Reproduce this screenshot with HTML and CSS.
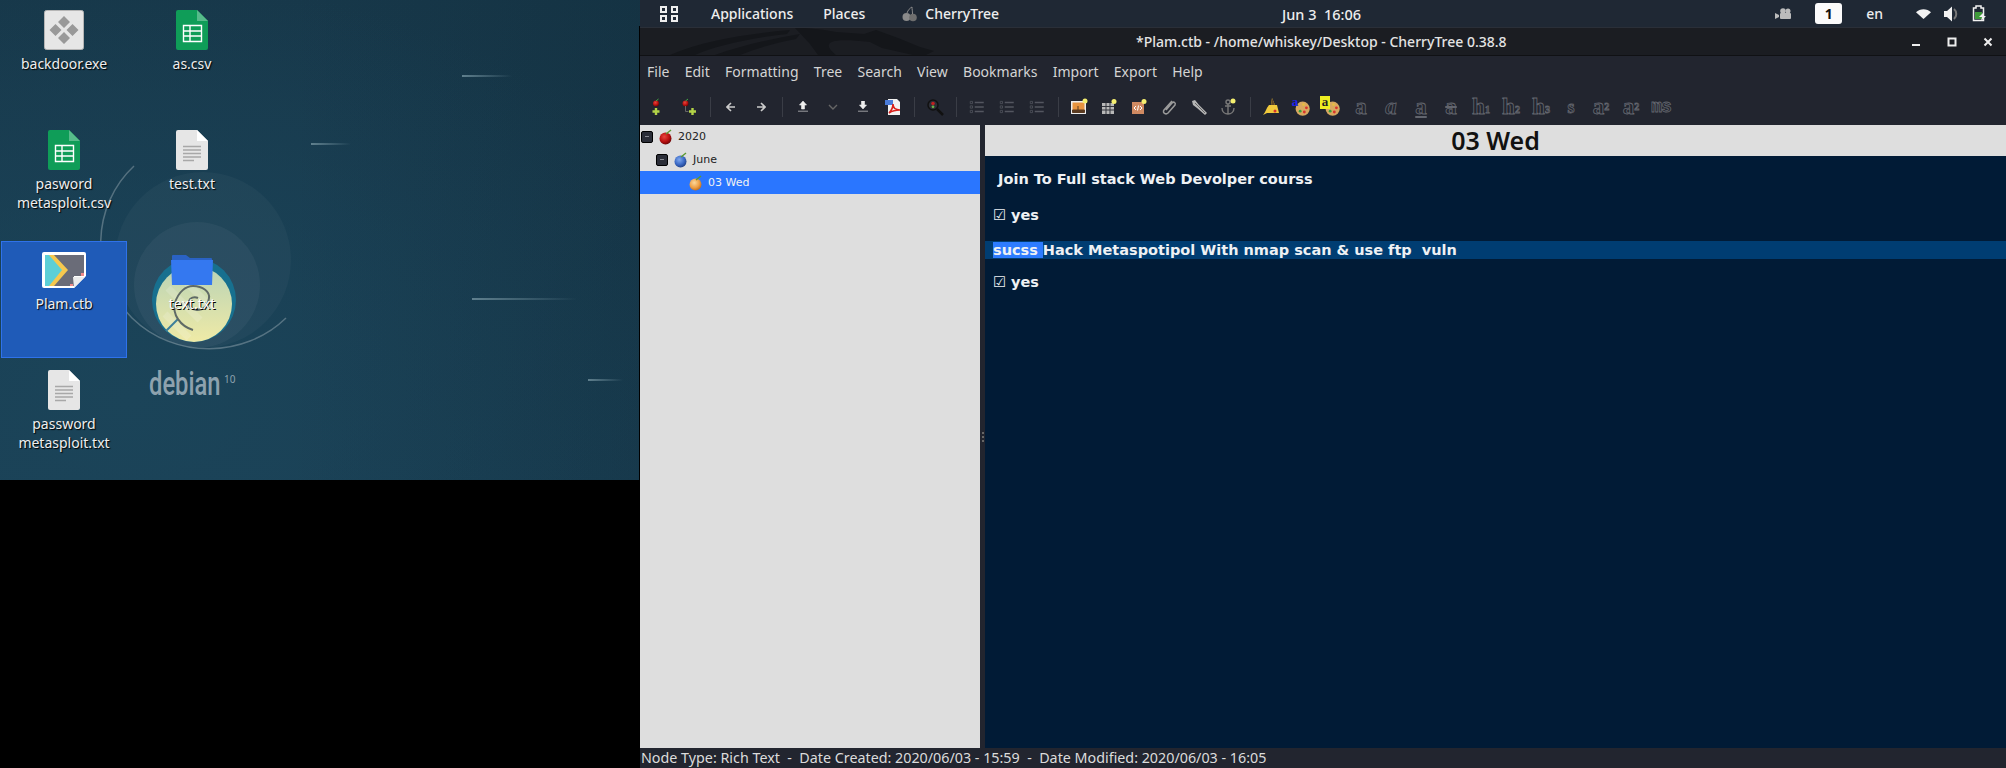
FILE: index.html
```html
<!DOCTYPE html>
<html lang="en">
<head>
    <meta charset="UTF-8">
    <title>Plam.ctb - CherryTree</title>
    <link rel="stylesheet" href="styles.css">
</head>
<body>
    <svg class="defs" width="0" height="0">
        <defs>
            <radialGradient id="redBall" cx="40%" cy="35%" r="70%"><stop offset="0" stop-color="#e8453c"/><stop offset=".6" stop-color="#b80f0f"/><stop offset="1" stop-color="#5e0505"/></radialGradient>
            <radialGradient id="blueBall" cx="40%" cy="35%" r="70%"><stop offset="0" stop-color="#7fa8ee"/><stop offset=".6" stop-color="#3a68c4"/><stop offset="1" stop-color="#1f3d80"/></radialGradient>
            <radialGradient id="orangeBall" cx="40%" cy="35%" r="70%"><stop offset="0" stop-color="#fbd79a"/><stop offset=".6" stop-color="#ee9f45"/><stop offset="1" stop-color="#b96a1e"/></radialGradient>
            <linearGradient id="creamFill" x1="0" y1="0" x2="0" y2="1"><stop offset="0" stop-color="#b9d3b6"/><stop offset="1" stop-color="#efeaa6"/></linearGradient>
            <symbol id="sheet" viewBox="0 0 48 48">
                <path d="M10 4h19l11 11v27a2 2 0 0 1-2 2H10a2 2 0 0 1-2-2V6a2 2 0 0 1 2-2z" fill="#0f9d58"/>
                <path d="M29 4l11 11H29z" fill="#57bb8a"/>
                <path d="M15.5 19.5h18v16h-18zM22 19.5v16M15.5 25h18M15.5 30h18" fill="none" stroke="#fff" stroke-width="1.4"/>
            </symbol>
            <symbol id="txtfile" viewBox="0 0 48 48">
                <path d="M10 4h19l11 11v27a2 2 0 0 1-2 2H10a2 2 0 0 1-2-2V6a2 2 0 0 1 2-2z" fill="#e6e6e6"/>
                <path d="M29 4l11 11H29z" fill="#fff"/>
                <path d="M15 20.5h18M15 24h18M15 27.5h18M15 31h18M15 34.500h11" stroke="#a8a8a8" stroke-width="1.4"/>
            </symbol>
            <symbol id="listicon" viewBox="0 0 24 24">
                <path d="M9 6h12M9 12h12M9 18h12" stroke="#53565f" stroke-width="2.200" fill="none"/>
                <path d="M3 4.500h3v3H3zM3 10.500h3v3H3zM3 16.500h3v3H3z" fill="none" stroke="#53565f"/>
            </symbol>
            <symbol id="palette" viewBox="0 0 24 24">
                <circle cx="14" cy="14" r="8.500" fill="#d9a860"/>
                <circle cx="11" cy="17" r="1.700" fill="#3aa03a"/><circle cx="16" cy="18" r="1.700" fill="#d8342c"/><circle cx="18.500" cy="13" r="1.700" fill="#d8342c"/><circle cx="15" cy="9" r="1.500" fill="#e8c03a"/>
            </symbol>
        </defs>
    </svg>

    <div class="desktop">
        <svg class="wallart" width="640" height="480" viewBox="0 0 640 480">
            <circle cx="203" cy="260" r="88" fill="#fff" opacity=".03"/>
            <circle cx="197" cy="285" r="63" fill="#fff" opacity=".045"/>
            <path d="M134 166C92 205 88 275 132 318C175 360 245 358 286 318" fill="none" stroke="#fff" stroke-opacity=".26" stroke-width="1.500"/>
            <circle cx="194" cy="300" r="42" fill="#17708f"/>
            <circle cx="194" cy="304" r="38" fill="url(#creamFill)"/>
            <path d="M168 288l32 32M180 276l32 32M165 314l24 24" stroke="#fff" stroke-opacity=".16" stroke-width="7"/>
            <path d="M166 331l12-12" stroke="#3d7f9a" stroke-width="2"/>
            <path d="M193 330C180 326 172 314 175 303C178 292 186 286 193 286C203 286 210 292 209 298C208 306 203 310 197 310C192 310 188 306 189 301C190 298 194 296 198 298" fill="none" stroke="#5f6a66" stroke-width="2"/>
        </svg>
        <i class="streak s1"></i><i class="streak s2"></i><i class="streak s3"></i><i class="streak s4"></i>
        <div class="brand"><span class="brand-name">debian</span><span class="brand-ver">10</span></div>

        <div class="icons">
            <div class="icon">
                <svg width="48" height="48" viewBox="0 0 48 48">
                    <rect x="4.500" y="4.500" width="39" height="39" rx="2" fill="#e6e6e6" stroke="#b5b5b5"/>
                    <path d="M24 10l6 6-6 6-6-6zM15.500 18l6 6-6 6-6-6zM32.500 18l6 6-6 6-6-6zM24 26l6 6-6 6-6-6z" fill="#999"/>
                </svg>
                <span>backdoor.exe</span>
            </div>
            <div class="icon"><svg width="48" height="48"><use href="#sheet"/></svg><span>as.csv</span></div>
            <div class="icon"><svg width="48" height="48"><use href="#sheet"/></svg><span>pasword<br>metasploit.csv</span></div>
            <div class="icon"><svg width="48" height="48"><use href="#txtfile"/></svg><span>test.txt</span></div>
            <div class="icon selected">
                <svg width="48" height="48" viewBox="0 0 48 48">
                    <path d="M4 6h40a2 2 0 0 1 2 2v22l-12 12H4a2 2 0 0 1-2-2V8a2 2 0 0 1 2-2z" fill="#fff"/>
                    <path d="M5 9h39v21H34v10H5z" fill="#6a6c78"/>
                    <path d="M5 9h6l12 15-12 16H5z" fill="#5ccfd6"/>
                    <path d="M9 9h5l14 15-14 16H9l13-16z" fill="#f6c84e"/>
                    <path d="M33 31h12L34 42z" fill="#ececec"/>
                    <path d="M41 27h3v3h-3zM30 38h3v2h-3z" fill="#f08a8a"/>
                </svg>
                <span>Plam.ctb</span>
            </div>
            <div class="icon folder">
                <svg width="48" height="48" viewBox="0 0 48 48">
                    <path d="M5 9h13l4 3h21a1 1 0 0 1 1 1v8H4V10a1 1 0 0 1 1-1z" fill="#2a62c4"/>
                    <path d="M3 14h42l-1 25H4z" fill="#3478f0"/>
                </svg>
                <span>text.txt</span>
            </div>
            <div class="icon"><svg width="48" height="48"><use href="#txtfile"/></svg><span>password<br>metasploit.txt</span></div>
        </div>
    </div>

    <div class="app">
        <header class="topbar">
            <svg class="activities" width="18" height="16" viewBox="0 0 18 16">
                <path d="M1 1h5v5H1zM12 1h5v5h-5zM1 10h5v5H1zM12 10h5v5h-5z" fill="none" stroke="#eee" stroke-width="2"/>
            </svg>
            <span class="top-item apps">Applications</span>
            <span class="top-item places">Places</span>
            <svg class="top-cherry" width="16" height="16" viewBox="0 0 16 16">
                <circle cx="4.500" cy="11" r="4" fill="#8a8a8a"/><circle cx="11" cy="11.500" r="3.800" fill="#6e6e6e"/>
                <path d="M5 7C6 4 8 2 10 1M10.500 8C10.500 5 10 3 10 1" fill="none" stroke="#8a8a8a"/>
            </svg>
            <span class="top-item">CherryTree</span>
            <span class="clock">Jun 3&nbsp; 16:06</span>
            <div class="tray">
                <svg class="cam" width="16" height="12" viewBox="0 0 16 12"><circle cx="8" cy="3" r="2.800" fill="#bbb"/><circle cx="13" cy="3" r="2.500" fill="#bbb"/><rect x="5" y="5" width="11" height="6" rx="1" fill="#bbb"/><path d="M0 5l4 2v2l-4 2z" fill="#bbb"/></svg>
                <span class="workspace">1</span>
                <span class="lang">en</span>
                <svg class="wifi" width="15" height="10" viewBox="0 0 15 10"><path d="M0 3.200C4-.8 11-.8 15 3.200L7.500 10z" fill="#f2f2f2"/></svg>
                <svg class="vol" width="15" height="16" viewBox="0 0 15 16"><path d="M0 5h3l5-4.500v15L3 11H0z" fill="#f2f2f2"/><path d="M10 3c3 2.500 3 7.500 0 10" fill="none" stroke="#777" stroke-width="2"/></svg>
                <svg class="batt" width="15" height="17" viewBox="0 0 15 17"><path d="M4 1h5v2h2.500v12.500h-10V3H4z" fill="none" stroke="#f2f2f2" stroke-width="1.500"/><path d="M3 7h7v7H3z" fill="#3f9a3a"/><path d="M11 8l-4 4h3l-1 4 5-5h-3z" fill="#f2f2f2"/></svg>
            </div>
        </header>

        <div class="titlebar">
            <svg class="dragon" width="300" height="27" viewBox="0 0 300 27">
                <path d="M15 27C50 12 90 6 135 2l-3 4C95 10 60 18 40 27zM60 27C85 18 115 11 145 6l-4 5C120 15 100 21 85 27z" fill="#14161a"/>
                <path d="M140 0l15 16 8 11h18C170 18 165 8 215 14l12 6 40 9 12-6-14-4-22-9-22-8-12 4-28-2C170 2 158 0 140 0z" fill="#14161a"/>
            </svg>
            <span class="title">*Plam.ctb - /home/whiskey/Desktop - CherryTree 0.38.8</span>
            <div class="win-btns">
                <svg width="10" height="10" viewBox="0 0 10 10"><path d="M1 8h8" stroke="#eee" stroke-width="2"/></svg>
                <svg width="10" height="10" viewBox="0 0 10 10"><rect x="1.500" y="1.500" width="7" height="7" fill="none" stroke="#eee" stroke-width="2"/></svg>
                <svg width="10" height="10" viewBox="0 0 10 10"><path d="M1.500 1.500l7 7M8.500 1.500l-7 7" stroke="#eee" stroke-width="2"/></svg>
            </div>
        </div>

        <nav class="menubar">
            <span>File</span><span>Edit</span><span>Formatting</span><span>Tree</span><span>Search</span><span>View</span><span>Bookmarks</span><span>Import</span><span>Export</span><span>Help</span>
        </nav>

        <div class="toolbar">
            <span class="tb"><svg width="20" height="20" viewBox="0 0 20 20"><circle cx="10" cy="6.500" r="3" fill="url(#redBall)"/><path d="M10 4l2.500-2" stroke="#4a4"/><path d="M8.800 11h2.400v2.300h2.300v2.400h-2.300V18H8.800v-2.300H6.500v-2.400h2.300z" fill="#b3d347"/></svg></span>
            <span class="tb tb-wide"><svg width="20" height="20" viewBox="0 0 20 20"><circle cx="6.500" cy="6.500" r="3" fill="url(#redBall)"/><path d="M6.500 4L9 2" stroke="#4a4"/><path d="M6.500 9v5.500h3" stroke="#666" fill="none"/><path d="M12.300 11h2.400v2.300H17v2.400h-2.300V18h-2.400v-2.300H10v-2.400h2.300z" fill="#b3d347"/></svg></span>
            <i class="sep"></i>
            <span class="tb"><svg width="10" height="10" viewBox="0 0 10 10"><path d="M5 1L1 5l4 4M1 5h8" fill="none" stroke="#ccc" stroke-width="1.600"/></svg></span>
            <span class="tb"><svg width="10" height="10" viewBox="0 0 10 10"><path d="M5 1l4 4-4 4M9 5H1" fill="none" stroke="#ccc" stroke-width="1.600"/></svg></span>
            <i class="sep"></i>
            <span class="tb"><svg width="10" height="11" viewBox="0 0 10 11"><path d="M5 0l3.500 4H6.500v4h-3V4H1.500zM0 10.200h10" fill="#eee" stroke="#eee" stroke-width=".6"/></svg></span>
            <span class="tb"><svg width="10" height="10" viewBox="0 0 10 10"><path d="M1 3l4 4 4-4" fill="none" stroke="#666" stroke-width="1.400"/></svg></span>
            <span class="tb"><svg width="10" height="11" viewBox="0 0 10 11"><path d="M3.500 0h3v4h2L5 8 1.500 4h2zM0 10.200h10" fill="#eee" stroke="#eee" stroke-width=".6"/></svg></span>
            <span class="tb"><svg width="18" height="18" viewBox="0 0 18 18"><path d="M4 1h9l3 3v13H4z" fill="#f2f2f2"/><path d="M1 2h8v5H1z" fill="#4a7bd8"/><path d="M5 15c3-3 4-6 4-9 0 4 3 6 7 6-4 0-8 1-11 3z" fill="none" stroke="#d8201c" stroke-width="1.600"/></svg></span>
            <i class="sep"></i>
            <span class="tb"><svg width="18" height="18" viewBox="0 0 18 18"><circle cx="7" cy="7" r="5" fill="#2c2e36" stroke="#111" stroke-width="1.500"/><path d="M11 11l6 6" stroke="#111" stroke-width="2.500"/><circle cx="7" cy="5.500" r="1.800" fill="#c02020"/><circle cx="7" cy="8.800" r="1.400" fill="#6ab04a"/></svg></span>
            <i class="sep"></i>
            <span class="tb"><svg width="18" height="18"><use href="#listicon"/></svg></span>
            <span class="tb"><svg width="18" height="18"><use href="#listicon"/></svg></span>
            <span class="tb"><svg width="18" height="18"><use href="#listicon"/></svg></span>
            <i class="sep"></i>
            <span class="tb"><svg width="18" height="18" viewBox="0 0 18 18"><rect x="1" y="3" width="15" height="13" fill="#eee"/><rect x="2.500" y="4.500" width="12" height="10" fill="#e89440"/><path d="M2.500 12h12v2.500h-12zM8 12V8" stroke="#5a3a20" fill="#5a3a20"/><circle cx="15" cy="3" r="2.500" fill="#f5ef70"/></svg></span>
            <span class="tb"><svg width="18" height="18" viewBox="0 0 18 18"><path d="M2 5h12v11H2z" fill="#b8b8b8"/><path d="M2 8.500h12M2 12h12M6 5v11M10 5v11" stroke="#33353d"/><circle cx="14" cy="3.500" r="2.500" fill="#f5ef70"/></svg></span>
            <span class="tb"><svg width="18" height="18" viewBox="0 0 18 18"><rect x="2" y="4" width="12" height="12" fill="#d08a62"/><path d="M6 8l-2 2 2 2M10 8l2 2-2 2M8.500 7.500l-1 5" fill="none" stroke="#fff"/><circle cx="14" cy="3.500" r="2.500" fill="#f5ef70"/></svg></span>
            <span class="tb"><svg width="18" height="18" viewBox="0 0 18 18"><path d="M12 3L4 12c-2 3 2 5 4 3l7-8c1-2-1-4-3-2L6 12" fill="none" stroke="#9a9a9a" stroke-width="1.500"/></svg></span>
            <span class="tb"><svg width="18" height="18" viewBox="0 0 18 18"><path d="M2 3l3-1 4 5 8 8-2 2-8-7-4-3z" fill="#b5b5b5"/><path d="M5 5l10 10" stroke="#666"/></svg></span>
            <span class="tb"><svg width="18" height="18" viewBox="0 0 18 18"><circle cx="8" cy="4" r="2" fill="none" stroke="#777" stroke-width="1.400"/><path d="M8 6v10M2 10c0 4 3 6 6 6s6-2 6-6M5 8h6" fill="none" stroke="#777" stroke-width="1.400"/><circle cx="13" cy="3" r="2.500" fill="#f5ef70"/></svg></span>
            <i class="sep"></i>
            <span class="tb"><svg width="18" height="18" viewBox="0 0 18 18"><path d="M10 0l3 7h2l2 8H5l-4 2c3-3 3-7 6-10h2z" fill="#f0c93c"/><path d="M10 0l3 7H9z" fill="#5b4426"/><circle cx="13" cy="13" r="1.500" fill="#d8342c"/></svg></span>
            <span class="tb tb-paint"><svg width="20" height="20"><use href="#palette"/></svg><b class="paint-a fg">a</b></span>
            <span class="tb tb-paint"><svg width="20" height="20"><use href="#palette"/></svg><b class="paint-a bg">a</b></span>
            <span class="tb glyph">a</span>
            <span class="tb glyph slant">a</span>
            <span class="tb glyph under">a</span>
            <span class="tb glyph strike">a</span>
            <span class="tb glyph">h<small>1</small></span>
            <span class="tb glyph">h<small>2</small></span>
            <span class="tb glyph">h<small>3</small></span>
            <span class="tb glyph little">s</span>
            <span class="tb glyph">a<sup>2</sup></span>
            <span class="tb glyph">a<sub>2</sub></span>
            <span class="tb glyph mono">ms</span>
        </div>

        <div class="panes">
            <aside class="tree">
                <div class="tree-row">
                    <i class="expander"></i>
                    <svg width="14" height="16" viewBox="0 0 14 16"><circle cx="6.500" cy="9.500" r="6" fill="url(#redBall)"/><path d="M7 5l5-4" stroke="#5a9a30" stroke-width="1.400"/></svg>
                    <span>2020</span>
                </div>
                <div class="tree-row lvl-1">
                    <i class="expander"></i>
                    <svg width="14" height="16" viewBox="0 0 14 16"><circle cx="6.500" cy="9.500" r="6" fill="url(#blueBall)"/><path d="M7 5l5-4" stroke="#5a9a30" stroke-width="1.400"/></svg>
                    <span>June</span>
                </div>
                <div class="tree-row lvl-2 current">
                    <svg width="14" height="16" viewBox="0 0 14 16"><circle cx="6.500" cy="9.500" r="6" fill="url(#orangeBall)"/><path d="M7 5l5-4" stroke="#5a9a30" stroke-width="1.400"/></svg>
                    <span>03 Wed</span>
                </div>
            </aside>
            <div class="grip"><i></i><i></i><i></i></div>
            <main class="note">
                <h1>03 Wed</h1>
                <div class="note-body">
                    <p class="first"> Join To Full stack Web Devolper courss</p>
                    <p class="second"><span class="check">☑</span> yes</p>
                    <p class="found"><span class="hit">sucss </span>Hack Metaspotipol With nmap scan &amp; use ftp  vuln</p>
                    <p><span class="check">☑</span> yes</p>
                </div>
            </main>
        </div>

        <footer class="statusbar">Node Type: Rich Text  -  Date Created: 2020/06/03 - 15:59  -  Date Modified: 2020/06/03 - 16:05</footer>
    </div>
</body>
</html>
```

FILE: styles.css
```css
html, body {
    margin: 0;
    padding: 0;
    height: 768px;
    overflow: hidden;
}
body {
    width: 2006px;
    display: grid;
    grid-template-columns: 640px 1366px;
    grid-template-rows: 768px;
    background: #000;
    font-family: "Noto Sans", sans-serif;
}
.defs {
    position: absolute;
}

/* desktop */
.desktop {
    position: relative;
    height: 480px;
    background: linear-gradient(90deg, #0a1e2800 45%, #0a1e2833 100%),
        radial-gradient(ellipse 640px 420px at 130px 400px, #1b4459 0%, #19405400 100%),
        linear-gradient(180deg, #17384a 0%, #1a3f54 100%);
}
.desktop::after {
    content: "";
    position: absolute;
    top: 26px;
    bottom: 0;
    right: 0;
    width: 1px;
    background: #000;
}
.wallart {
    position: absolute;
    top: 0;
    left: 0;
}
.streak {
    position: absolute;
    height: 2px;
    background: linear-gradient(90deg, #60808e, #60808e00);
}
.s1 { left: 462px; top: 75px; width: 50px; }
.s2 { left: 311px; top: 143px; width: 40px; }
.s3 { left: 472px; top: 298px; width: 105px; }
.s4 { left: 588px; top: 379px; width: 35px; }
.brand {
    position: absolute;
    left: 149px;
    top: 364px;
    color: #8ea2ae;
    display: flex;
}
.brand-name {
    font-size: 33px;
    line-height: 40px;
    font-weight: 500;
    display: block;
    width: 70px;
    transform: scaleX(.72);
    transform-origin: left;
    font-family: "Roboto", sans-serif;
}
.brand-ver {
    font-size: 10px;
    line-height: 30px;
    margin-left: 5px;
}
.icons {
    position: relative;
    display: grid;
    grid-template-columns: 128px 128px;
    grid-auto-rows: 120px;
    width: 256px;
}
.icon {
    margin: 1px 1px 2px;
    padding-top: 4px;
    border: 1px solid transparent;
    box-sizing: border-box;
    display: flex;
    flex-direction: column;
    align-items: center;
    color: #eee;
    font-size: 14px;
    line-height: 19px;
    text-align: center;
    text-shadow: 1px 1px 1px #000;
}
.selected {
    background: #1f5bb8;
    border-color: #2f72ea;
}
.folder span {
    color: #fff;
    text-shadow: 1px 1px 0 #000;
}

/* gnome panel */
.app {
    display: flex;
    flex-direction: column;
    height: 768px;
}
.topbar {
    height: 27px;
    flex: none;
    border-bottom: 1px solid #2a2f38;
    background: #1f2834;
    display: flex;
    align-items: center;
    color: #eee;
    font-size: 14px;
    font-weight: 500;
    position: relative;
}
.activities {
    margin-left: 20px;
}
.top-item.apps {
    margin-left: 33px;
}
.top-item.places {
    margin-left: 30px;
}
.top-cherry {
    margin-left: 37px;
    margin-right: 7px;
}
.clock {
    position: absolute;
    left: 642px;
    font-size: 14.500px;
}
.tray {
    margin-left: auto;
    display: flex;
    align-items: center;
}
.cam {
    margin-right: 24px;
}
.workspace {
    width: 27px;
    height: 21px;
    line-height: 21px;
    border-radius: 3px;
    background: #fbfbfb;
    color: #111;
    font-weight: 700;
    text-align: center;
}
.lang {
    margin-left: 24px;
}
.wifi {
    margin-left: 33px;
}
.vol {
    margin-left: 13px;
}
.batt {
    margin-left: 13px;
    margin-right: 19px;
}

/* window */
.titlebar {
    position: relative;
    height: 27px;
    flex: none;
    border-bottom: 1px solid #101114;
    background: #1b1d22;
    display: flex;
    align-items: center;
    color: #e4e4e4;
    font-size: 14px;
    font-weight: 500;
}
.dragon {
    position: absolute;
    left: 15px;
    top: 0;
}
.title {
    position: absolute;
    left: 496px;
}
.win-btns {
    margin-left: auto;
    margin-right: 13px;
    display: flex;
    gap: 26px;
}
.menubar {
    height: 32px;
    flex: none;
    box-sizing: border-box;
    padding: 0 0 2px 7px;
    background: #22252f;
    display: flex;
    align-items: center;
    gap: 15.300px;
    color: #d4d4d4;
    font-size: 14px;
}
.toolbar {
    height: 37px;
    flex: none;
    background: #22252f;
    display: flex;
    align-items: center;
    padding-left: 1px;
}
.tb {
    width: 30px;
    height: 30px;
    flex: none;
    display: flex;
    align-items: center;
    justify-content: center;
}
.tb-wide {
    margin-left: 3px;
}
.sep {
    width: 1px;
    height: 20px;
    margin: 0 5px 0 6px;
    background: #3a3d46;
    flex: none;
}
.tb-paint {
    position: relative;
}
.paint-a {
    position: absolute;
    left: 4px;
    top: 4px;
    width: 10px;
    height: 13px;
    font: bold 13px/12px "Liberation Serif", serif;
    text-align: center;
}
.paint-a.fg {
    color: #2222ee;
}
.paint-a.bg {
    color: #222;
    background: #eeee22;
}
.glyph {
    font: bold 23px/30px "Liberation Serif", serif;
    color: transparent;
    -webkit-text-stroke: .8px #62656e;
}
.glyph small {
    font-size: 10px;
    align-self: flex-end;
    line-height: 20px;
    margin-bottom: 2px;
}
.glyph sup, .glyph sub {
    font-size: 10px;
    line-height: 0;
}
.slant {
    font-style: italic;
}
.under {
    text-decoration: underline;
    text-decoration-color: #62656e;
}
.strike {
    text-decoration: line-through;
    text-decoration-color: #62656e;
}
.little {
    font-size: 18px;
}
.mono {
    font: bold 18px/30px "Liberation Mono", monospace;
    letter-spacing: -1px;
}

/* panes */
.panes {
    flex: 1;
    min-height: 0;
    display: flex;
    background: #22252f;
}
.tree {
    width: 340px;
    flex: none;
    background: #dedede;
    color: #222;
    font: 11px/23px "DejaVu Sans", sans-serif;
}
.tree-row {
    height: 23px;
    display: flex;
    align-items: center;
    padding-left: 1px;
    gap: 6px;
}
.tree-row svg {
    margin-right: -1px;
}
.lvl-1 {
    padding-left: 16px;
}
.lvl-2 {
    padding-left: 49px;
}
.current {
    background: #2a76ff;
    color: #f2f2f2;
}
.expander {
    width: 12px;
    height: 12px;
    box-sizing: border-box;
    border-radius: 2px;
    border: 1px solid #000;
    background: #2b2e38;
    position: relative;
    flex: none;
}
.expander::after {
    content: "";
    position: absolute;
    left: 3px;
    top: 4px;
    width: 4px;
    height: 1px;
    background: #8a8c94;
}
.grip {
    width: 5px;
    flex: none;
    display: flex;
    flex-direction: column;
    justify-content: center;
    align-items: center;
    gap: 2px;
}
.grip i {
    width: 2px;
    height: 2px;
    background: #666;
}
.note {
    flex: 1;
    min-width: 0;
    display: flex;
    flex-direction: column;
    background: #011b36;
}
.note h1 {
    margin: 0;
    height: 31px;
    background: #dedede;
    color: #111;
    font-size: 25px;
    line-height: 31px;
    font-weight: 600;
    text-align: center;
}
.note-body {
    padding-top: 14px;
    font: bold 14.500px/18px "DejaVu Sans", sans-serif;
    color: #eef1f4;
}
.note-body p {
    margin: 0 0 14px 0;
    padding-left: 8px;
    white-space: pre;
}
.note-body .first {
    margin-bottom: 18px;
    padding-left: 8px;
}
.note-body .second {
    margin-bottom: 17px;
}
.check {
    font-weight: normal;
}
.note-body .found {
    background: #003d72;
}
.hit {
    background: #2d7cff;
}
.statusbar {
    height: 20px;
    flex: none;
    padding-left: 1px;
    background: #22252f;
    color: #dcdcdc;
    font-size: 14.300px;
    line-height: 20px;
    white-space: pre;
}
```
